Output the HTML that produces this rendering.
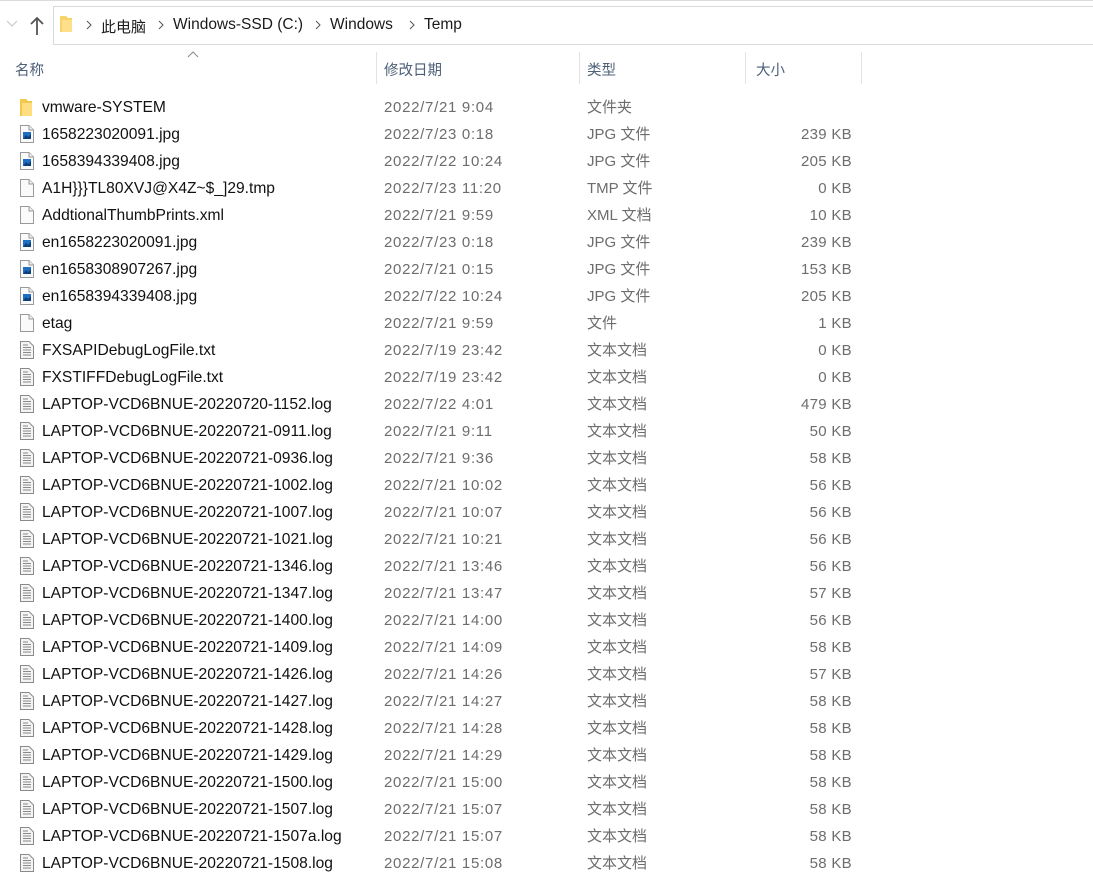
<!DOCTYPE html>
<html><head><meta charset="utf-8"><style>
*{margin:0;padding:0;box-sizing:border-box}
body{width:1093px;height:866px;overflow:hidden;background:#fff;position:relative;font-family:"Liberation Sans","Noto Sans CJK SC",sans-serif;font-size:15px}
.a{position:absolute;white-space:nowrap}
.r{position:absolute;left:0;width:1093px;height:27px}
.r span{position:absolute;top:5px;line-height:19px}
.n{left:42px;color:#111;font-size:15.6px}
.d{left:384px;color:#6d6d6d;letter-spacing:0.7px}
.t{left:587px;color:#6d6d6d}
.s{right:241px;color:#6d6d6d;letter-spacing:0.3px}
.ic{position:absolute;left:19px;top:4px}
.h{position:absolute;top:59px;color:#4d6079;font-size:14.5px}
.sep{position:absolute;top:52px;width:1px;height:32px;background:#e3e3e3}
</style></head><body>
<div class="a" style="left:0;top:0;width:1093px;height:1px;background:#dcdcdc"></div>
<div class="a" style="left:53px;top:6px;width:1045px;height:39px;border:1px solid #d9d9d9"></div>
<svg class="a" style="left:6px;top:20px" width="12" height="8"><path d="M1 1 L6 6 L11 1" stroke="#c8c8c8" fill="none" stroke-width="1.2"/></svg>
<svg class="a" style="left:29px;top:16px" width="16" height="20"><path d="M8 2 V19 M2 8 L8 2 L14 8" stroke="#555" fill="none" stroke-width="1.8"/></svg>
<svg class="a" style="left:59px;top:15px" width="14" height="18"><path d="M1 1 H7 L9 3 H13 V17 H1Z" fill="#f7d46a"/><path d="M3 5 H13 V17 H3Z" fill="#ffe08a"/></svg>
<svg class="a" style="left:86px;top:20px" width="6" height="10"><path d="M1 1 L5 5 L1 9" stroke="#555" fill="none"/></svg>
<div class="a" style="left:101px;top:16px;color:#1a1a1a">此电脑</div>
<svg class="a" style="left:158px;top:20px" width="6" height="10"><path d="M1 1 L5 5 L1 9" stroke="#555" fill="none"/></svg>
<div class="a" style="left:173px;top:16px;color:#1a1a1a;font-size:15.5px">Windows-SSD (C:)</div>
<svg class="a" style="left:315px;top:20px" width="6" height="10"><path d="M1 1 L5 5 L1 9" stroke="#555" fill="none"/></svg>
<div class="a" style="left:330px;top:16px;color:#1a1a1a;font-size:15.5px">Windows</div>
<svg class="a" style="left:409px;top:20px" width="6" height="10"><path d="M1 1 L5 5 L1 9" stroke="#555" fill="none"/></svg>
<div class="a" style="left:424px;top:16px;color:#1a1a1a;font-size:15.5px">Temp</div>
<svg class="a" style="left:187px;top:51px" width="12" height="7"><path d="M1 6 L6 1 L11 6" stroke="#888" fill="none" stroke-width="1"/></svg>
<div class="h" style="left:15px">名称</div>
<div class="sep" style="left:376px"></div>
<div class="h" style="left:384px">修改日期</div>
<div class="sep" style="left:579px"></div>
<div class="h" style="left:587px">类型</div>
<div class="sep" style="left:745px"></div>
<div class="h" style="left:756px">大小</div>
<div class="sep" style="left:861px"></div>
<div id="rows"></div>
<script>
var F='<svg class="ic" width="16" height="20" viewBox="0 0 16 20"><path d="M1 2 H7 L9 4 H13 V19 H1Z" fill="#f2c94c"/><path d="M3 6 H13 V19 H3Z" fill="#ffdd80"/></svg>';
var J='<svg class="ic" width="16" height="20" viewBox="0 0 16 20"><path d="M1.5 1.5 H10 L14.5 6 V18.5 H1.5Z" fill="#fafafa" stroke="#9a9a9a"/><path d="M10 1.5 V6 H14.5" fill="#eee" stroke="#9a9a9a"/><rect x="4" y="8" width="8" height="7" fill="#1e6fc4"/><path d="M4 15 L7 11 L9 13 L12 10 V15Z" fill="#0d3f7a"/></svg>';
var B='<svg class="ic" width="16" height="20" viewBox="0 0 16 20"><path d="M1.5 1.5 H10 L14.5 6 V18.5 H1.5Z" fill="#fafafa" stroke="#9a9a9a"/><path d="M10 1.5 V6 H14.5" fill="#eee" stroke="#9a9a9a"/></svg>';
var T='<svg class="ic" width="16" height="20" viewBox="0 0 16 20"><path d="M1.5 1.5 H10 L14.5 6 V18.5 H1.5Z" fill="#f4f4f4" stroke="#8a8a8a"/><path d="M4 5h5M4 7.5h8M4 10h8M4 12.5h8M4 15h8" stroke="#8a8a8a"/></svg>';
var d=[[F,'vmware-SYSTEM','2022/7/21 9:04','文件夹',''],
[J,'1658223020091.jpg','2022/7/23 0:18','JPG 文件','239 KB'],
[J,'1658394339408.jpg','2022/7/22 10:24','JPG 文件','205 KB'],
[B,'A1H}}}TL80XVJ@X4Z~$_]29.tmp','2022/7/23 11:20','TMP 文件','0 KB'],
[B,'AddtionalThumbPrints.xml','2022/7/21 9:59','XML 文档','10 KB'],
[J,'en1658223020091.jpg','2022/7/23 0:18','JPG 文件','239 KB'],
[J,'en1658308907267.jpg','2022/7/21 0:15','JPG 文件','153 KB'],
[J,'en1658394339408.jpg','2022/7/22 10:24','JPG 文件','205 KB'],
[B,'etag','2022/7/21 9:59','文件','1 KB'],
[T,'FXSAPIDebugLogFile.txt','2022/7/19 23:42','文本文档','0 KB'],
[T,'FXSTIFFDebugLogFile.txt','2022/7/19 23:42','文本文档','0 KB']];
var L=[['20220720-1152','2022/7/22 4:01','479 KB'],['20220721-0911','2022/7/21 9:11','50 KB'],['20220721-0936','2022/7/21 9:36','58 KB'],['20220721-1002','2022/7/21 10:02','56 KB'],['20220721-1007','2022/7/21 10:07','56 KB'],['20220721-1021','2022/7/21 10:21','56 KB'],['20220721-1346','2022/7/21 13:46','56 KB'],['20220721-1347','2022/7/21 13:47','57 KB'],['20220721-1400','2022/7/21 14:00','56 KB'],['20220721-1409','2022/7/21 14:09','58 KB'],['20220721-1426','2022/7/21 14:26','57 KB'],['20220721-1427','2022/7/21 14:27','58 KB'],['20220721-1428','2022/7/21 14:28','58 KB'],['20220721-1429','2022/7/21 14:29','58 KB'],['20220721-1500','2022/7/21 15:00','58 KB'],['20220721-1507','2022/7/21 15:07','58 KB'],['20220721-1507a','2022/7/21 15:07','58 KB'],['20220721-1508','2022/7/21 15:08','58 KB']];
L.forEach(function(x){d.push([T,'LAPTOP-VCD6BNUE-'+x[0]+'.log',x[1],'文本文档',x[2]])});
var h='';d.forEach(function(x,i){h+='<div class="r" style="top:'+(93+27*i)+'px">'+x[0]+'<span class="n">'+x[1]+'</span><span class="d">'+x[2]+'</span><span class="t">'+x[3]+'</span><span class="s">'+x[4]+'</span></div>'});
document.getElementById('rows').innerHTML=h;
</script>
</body></html>
